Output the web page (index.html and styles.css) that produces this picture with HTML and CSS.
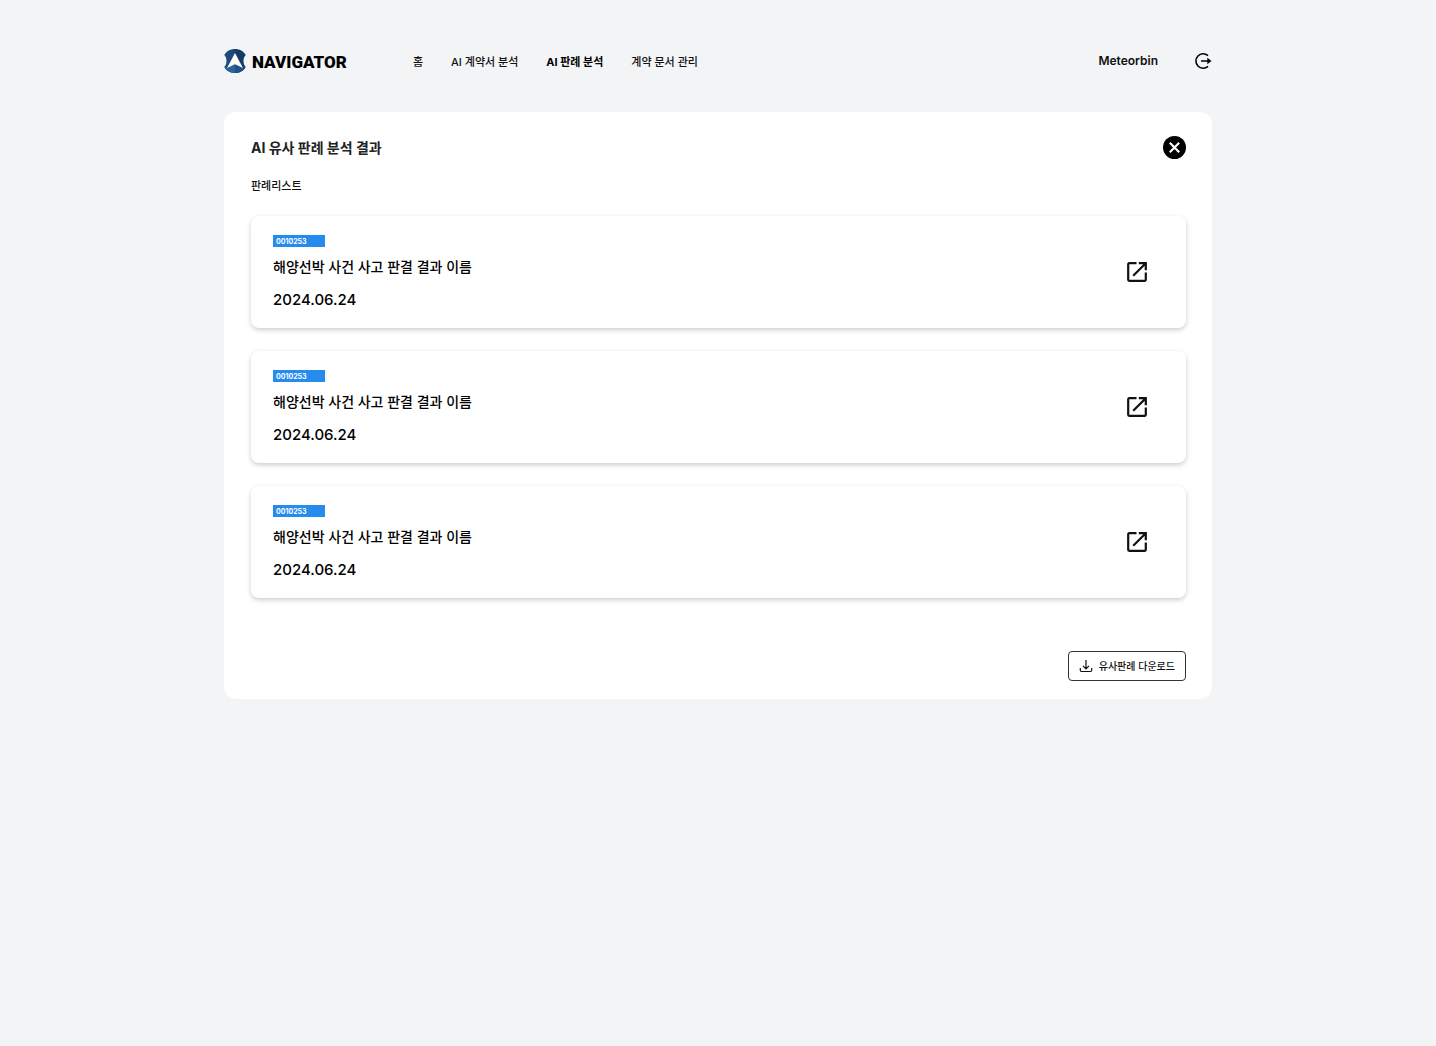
FILE: index.html
```html
<!DOCTYPE html>
<html lang="ko">
<head>
<meta charset="utf-8">
<meta name="viewport" content="width=device-width, initial-scale=1">
<title>AI 유사 판례 분석 결과</title>
<link rel="stylesheet" href="styles.css">
</head>
<body>
<svg class="defs" aria-hidden="true">
  <symbol id="open" viewBox="0 0 20 20">
    <path d="M9.500 1.200H2.200a1 1 0 0 0-1 1v15.600a1 1 0 0 0 1 1h15.600a1 1 0 0 0 1-1V10.500M11.800 1.200h7v7M18.500 1.500 6.200 13.800" fill="none" stroke="currentColor" stroke-width="2.200"/>
  </symbol>
</svg>
<div class="page">
  <header class="header">
    <a class="brand" href="#">
      <svg class="brand-mark" viewBox="0 0 22 26" aria-hidden="true">
        <path d="M11 1C6.500 1 2.500 3 .3 7c1.700 1.800 2.200 3.800 2.200 6S2 17.200.3 19c2.200 4 6.200 6 10.700 6z" fill="#1d4a7c"/>
        <path d="M11 1c4.500 0 8.500 2 10.700 6-1.700 1.800-2.200 3.800-2.200 6s.5 4.200 2.200 6c-2.200 4-6.200 6-10.700 6z" fill="#143a66"/>
        <path d="M11 16.500 .8 19.800C3.200 23.300 7 25 11 25z" fill="#2b639b"/>
        <path d="M11 16.500 21.200 19.800C18.800 23.300 15 25 11 25z" fill="#1f5288"/>
        <path d="M11 5 19 20 11 16.200 3 20z" fill="#fff"/>
      </svg>
      <span class="brand-name">NAVIGATOR</span>
    </a>
    <nav class="nav">
      <a href="#">홈</a>
      <a href="#">AI 계약서 분석</a>
      <a class="active" href="#" aria-current="page">AI 판례 분석</a>
      <a href="#">계약 문서 관리</a>
    </nav>
    <div class="account">
      <span>Meteorbin</span>
      <button class="icon-button" type="button" aria-label="로그아웃">
        <svg width="18" height="18" viewBox="0 0 18 18" fill="none" stroke="currentColor" stroke-width="1.600" aria-hidden="true">
          <path d="M14 3.700A7.200 7.200 0 1 0 14 14.300M7 9h8"/>
          <path d="M13.300 5.800 17.500 9l-4.200 3.200z" fill="currentColor" stroke="none"/>
        </svg>
      </button>
    </div>
  </header>

  <main class="panel">
    <div class="panel-head">
      <h1>AI 유사 판례 분석 결과</h1>
      <button class="icon-button" type="button" aria-label="닫기">
        <svg width="23" height="23" viewBox="0 0 23 23" aria-hidden="true">
          <circle cx="11.500" cy="11.500" r="11.500"/>
          <path d="m6.800 6.800 9.400 9.400m0-9.400-9.400 9.400" stroke="#fff" stroke-width="2.200"/>
        </svg>
      </button>
    </div>
    <h2>판례리스트</h2>
    <ul class="cases">
      <li class="case">
        <div>
          <span class="badge">0010253</span>
          <h3>해양선박 사건 사고 판결 결과 이름</h3>
          <time datetime="2024-06-24">2024.06.24</time>
        </div>
        <a href="#" aria-label="판례 열기"><svg class="open-icon" aria-hidden="true"><use href="#open"/></svg></a>
      </li>
      <li class="case">
        <div>
          <span class="badge">0010253</span>
          <h3>해양선박 사건 사고 판결 결과 이름</h3>
          <time datetime="2024-06-24">2024.06.24</time>
        </div>
        <a href="#" aria-label="판례 열기"><svg class="open-icon" aria-hidden="true"><use href="#open"/></svg></a>
      </li>
      <li class="case">
        <div>
          <span class="badge">0010253</span>
          <h3>해양선박 사건 사고 판결 결과 이름</h3>
          <time datetime="2024-06-24">2024.06.24</time>
        </div>
        <a href="#" aria-label="판례 열기"><svg class="open-icon" aria-hidden="true"><use href="#open"/></svg></a>
      </li>
    </ul>
    <button class="download" type="button">
      <svg width="14" height="14" viewBox="0 0 14 14" fill="none" stroke="currentColor" stroke-width="1.200" aria-hidden="true">
        <path d="M7 1v8.500M4 6.800l3 3 3-3M1.300 9v2.300a1.200 1.200 0 0 0 1.200 1.200h9a1.200 1.200 0 0 0 1.200-1.200V9"/>
      </svg>
      유사판례 다운로드
    </button>
  </main>
</div>
</body>
</html>
```
FILE: styles.css
```css
* {
  box-sizing: border-box;
}

body {
  margin: 0;
  background: #f2f4f6;
  color: #111;
  font-family: Inter, "Noto Sans CJK KR", sans-serif;
  font-size: 11px;
  font-weight: 500;
  line-height: 20px;
}

h1, h2, h3, ul {
  margin: 0;
  padding: 0;
}

a {
  color: inherit;
  text-decoration: none;
}

button {
  padding: 0;
  border: 0;
  background: none;
  color: inherit;
  font: inherit;
  cursor: pointer;
}

svg {
  display: block;
}

.defs {
  display: none;
}

.page {
  max-width: 1036px;
  margin: 0 auto;
  padding: 48px 24px;
}

.header {
  display: flex;
  align-items: center;
  margin-bottom: 38px;
}

.brand {
  display: flex;
  align-items: center;
  gap: 6px;
}

.brand-mark {
  width: 22px;
  height: 26px;
}

.brand-name {
  padding-top: 1px;
  color: #000;
  font-family: Roboto, sans-serif;
  font-size: 17px;
  font-weight: 900;
}

.nav {
  display: flex;
  gap: 28px;
  margin-left: 66px;
  padding-top: 2px;
}

.active {
  color: #000;
  font-weight: 700;
}

.account {
  display: flex;
  align-items: center;
  gap: 36px;
  margin-left: auto;
  font-size: 12px;
  font-weight: 600;
}

.icon-button {
  color: #000;
}

.panel {
  display: flex;
  flex-direction: column;
  padding: 24px 26px 18px 27px;
  border-radius: 12px;
  background: #fff;
}

.panel-head {
  display: flex;
  align-items: center;
  justify-content: space-between;
}

h1 {
  color: #222;
  font-size: 14px;
  font-weight: 700;
}

h2 {
  margin: 17px 0 20px;
  font-size: 11px;
  font-weight: 500;
}

.cases {
  display: grid;
  gap: 23px;
  list-style: none;
}

.case {
  display: flex;
  align-items: center;
  justify-content: space-between;
  min-height: 112px;
  padding: 16px 39px 16px 22px;
  border-radius: 8px;
  background: #fff;
  box-shadow: 0 2px 5px rgba(0, 0, 0, 0.2);
}

.badge {
  display: block;
  width: 52px;
  padding: 1px 0 0 3px;
  background: #258cee;
  color: #fff;
  font-size: 7px;
  font-weight: 700;
  line-height: 11px;
}

h3 {
  margin: 10px 0 13px;
  color: #000;
  font-size: 14px;
  font-weight: 500;
}

time {
  display: block;
  color: #000;
  font-size: 15px;
}

.open-icon {
  width: 20px;
  height: 20px;
}

.download {
  display: flex;
  align-items: center;
  align-self: flex-end;
  gap: 6px;
  margin-top: 53px;
  padding: 4px 10px;
  border: 1px solid #333;
  border-radius: 4px;
  font-size: 10px;
}
```
